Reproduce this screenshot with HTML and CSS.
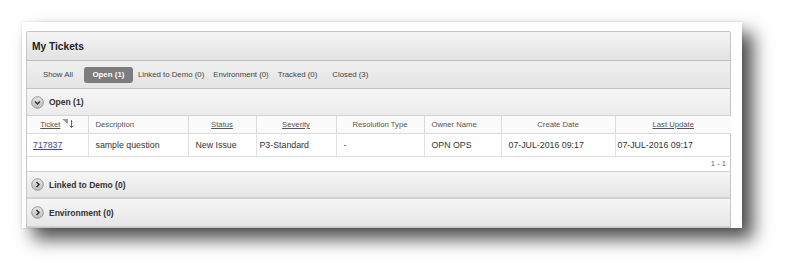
FILE: index.html
```html
<!DOCTYPE html>
<html lang="en">
<head>
	<meta charset="utf-8">
	<title>My Tickets</title>
	<link rel="stylesheet" href="styles.css">
</head>
<body>
<div class="card">
	<div class="region">
		<div class="title">My Tickets</div>

		<div class="tabs">
			<span class="tab first">Show All</span>
			<span class="tab current">Open (1)</span>
			<span class="tab">Linked to Demo (0)</span>
			<span class="tab">Environment (0)</span>
			<span class="tab">Tracked (0)</span>
			<span class="tab last">Closed (3)</span>
		</div>

		<div class="sub">
			<svg class="toggle" width="13" height="13" viewBox="0 0 13 13">
				<defs>
					<linearGradient id="btn" x1="0" y1="0" x2="0" y2="1">
						<stop offset="0" stop-color="#e6e6e6"/>
						<stop offset="1" stop-color="#bdbdbd"/>
					</linearGradient>
				</defs>
				<circle cx="6.5" cy="6.5" r="5.8" fill="url(#btn)" stroke="#8c8c8c" stroke-width="0.9"/>
				<path d="M4 5.5 L6.5 8 L9 5.5" fill="none" stroke="#333" stroke-width="1.5"/>
			</svg>
			<span>Open (1)</span>
		</div>

		<table class="report">
			<colgroup>
				<col style="width:61px"><col style="width:100px"><col style="width:68px"><col style="width:80px">
				<col style="width:88px"><col style="width:77px"><col style="width:114px"><col style="width:116px">
			</colgroup>
			<thead>
				<tr>
					<th><a href="#">Ticket</a><svg class="sort" width="12" height="10" viewBox="0 0 12 10"><polygon points="0,0 6,0 6,5" fill="#9a9a9a"/><path d="M9.5 1 V8.5 M7.8 6.6 L9.5 8.6 L11.2 6.6" fill="none" stroke="#555" stroke-width="0.9"/></svg></th>
					<th class="left">Description</th>
					<th><a href="#">Status</a></th>
					<th><a href="#">Severity</a></th>
					<th>Resolution Type</th>
					<th class="left">Owner Name</th>
					<th>Create Date</th>
					<th><a href="#">Last Update</a></th>
				</tr>
			</thead>
			<tbody>
				<tr>
					<td><a class="id" href="#">717837</a></td>
					<td>sample question</td>
					<td>New Issue</td>
					<td class="tight">P3-Standard</td>
					<td>-</td>
					<td>OPN OPS</td>
					<td>07-JUL-2016 09:17</td>
					<td class="tighter">07-JUL-2016 09:17</td>
				</tr>
			</tbody>
		</table>
		<div class="pager">1 - 1</div>

		<div class="sub closed">
			<svg class="toggle" width="13" height="13" viewBox="0 0 13 13">
				<circle cx="6.5" cy="6.5" r="5.8" fill="url(#btn)" stroke="#8c8c8c" stroke-width="0.9"/>
				<path d="M5.5 4 L8 6.5 L5.5 9" fill="none" stroke="#333" stroke-width="1.5"/>
			</svg>
			<span>Linked to Demo (0)</span>
		</div>
		<div class="sub closed">
			<svg class="toggle" width="13" height="13" viewBox="0 0 13 13">
				<circle cx="6.5" cy="6.5" r="5.8" fill="url(#btn)" stroke="#8c8c8c" stroke-width="0.9"/>
				<path d="M5.5 4 L8 6.5 L5.5 9" fill="none" stroke="#333" stroke-width="1.5"/>
			</svg>
			<span>Environment (0)</span>
		</div>
	</div>
</div>
</body>
</html>
```

FILE: styles.css
```css
html { background-color: white; }
body {
	box-sizing: border-box;
	min-height: 100vh;
	margin: 0;
	padding: 22px 0 0 22px;
	font-family: "Liberation Sans", Arial, sans-serif;
	color: #333;
}
.card {
	box-sizing: border-box;
	width: 720px;
	height: 206px;
	padding: 9px 11px 0 4px;
	overflow: hidden;
	background-color: white;
	box-shadow: 11px 11px 17px rgba(0, 0, 0, .7), 0 0 3px rgba(0, 0, 0, .12);
}
.region {
	border: solid 1px #c6c6c6;
	border-radius: 2px 2px 0 0;
}
.title {
	height: 28px;
	padding-left: 5px;
	display: flex;
	align-items: center;
	font-size: 10.2px;
	font-weight: bold;
	color: #222;
	background: linear-gradient(#f4f4f4, #e2e2e2);
	border-bottom: solid 1px #bcbcbc;
}
.tabs {
	height: 27px;
	padding-left: 12px;
	display: flex;
	align-items: center;
	gap: 1px;
	font-size: 7.8px;
	color: #444;
	background: linear-gradient(#efefef, #e4e4e4);
	border-bottom: solid 1px #c4c4c4;
}
.tab { padding: 0 4px; line-height: 16px; }
.tab.first { margin-right: 6px; }
.tab.last { margin-left: 6px; }
.tab.current {
	padding: 0 8.5px;
	font-weight: bold;
	font-size: 7.9px;
	color: white;
	background-color: #7c7c7c;
	border-radius: 3px;
}
.sub {
	height: 26px;
	padding-left: 4px;
	display: flex;
	align-items: center;
	gap: 5px;
	font-size: 8.5px;
	font-weight: bold;
	color: #333;
	background: linear-gradient(#f6f6f6, #ebebeb);
	border-bottom: solid 1px #d2d2d2;
}
.sub.closed {
	height: 25px;
	background: linear-gradient(#f6f6f6, #e6e6e6);
	border-top: solid 1px #d0d0d0;
}
.sub.closed + .sub.closed { height: 27px; }
.report {
	width: 704px;
	border-collapse: collapse;
	table-layout: fixed;
}
.report th {
	height: 17px;
	padding: 0;
	font-size: 7.7px;
	font-weight: normal;
	color: #555;
	background-color: #fbfbfb;
	border-left: solid 1px #dcdcdc;
	border-bottom: solid 1px #dcdcdc;
	text-align: center;
	white-space: nowrap;
}
.report th.left { text-align: left; padding-left: 7px; }
.report th a { color: #555; }
.report th:first-child, .report td:first-child { border-left: none; }
.sort { vertical-align: top; margin-left: 2px; margin-top: -1px; }
.report td {
	height: 22px;
	padding: 0 0 0 7px;
	font-size: 8.8px;
	color: #333;
	border-left: solid 1px #e2e2e2;
	border-bottom: solid 1px #dedede;
	white-space: nowrap;
}
.report td:first-child { padding-left: 6px; }
.report td.tight { padding-left: 3px; }
.report td.tighter { padding-left: 2px; }
.id { color: #3b4c94; }
.pager {
	height: 14px;
	padding-right: 4px;
	text-align: right;
	font-size: 7.6px;
	line-height: 14px;
	color: #666;
	background-color: white;
}
```
